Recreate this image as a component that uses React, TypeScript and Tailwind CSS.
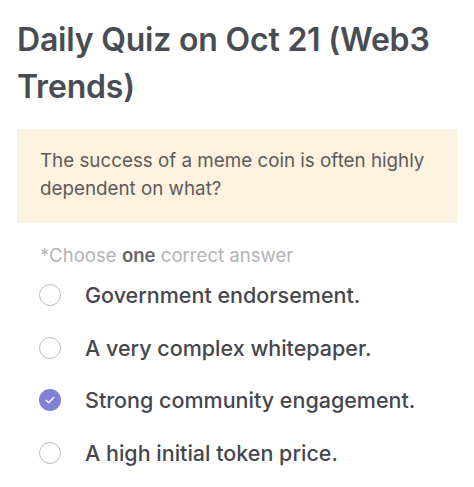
import React from 'react';

const options = [
  'Government endorsement.',
  'A very complex whitepaper.',
  'Strong community engagement.',
  'A high initial token price.',
];

const Radio = ({ checked }: { checked: boolean }) =>
  checked ? (
    <span className="flex h-[22px] w-[22px] items-center justify-center rounded-full bg-[#7f82d6]">
      <svg width="12" height="12" viewBox="0 0 12 12" fill="none">
        <path d="M2.2 6.3l2.5 2.4 5-5.2" stroke="#fff" strokeWidth="1.4" strokeLinecap="round" strokeLinejoin="round" />
      </svg>
    </span>
  ) : (
    <span className="h-[22px] w-[22px] rounded-full border-[1.5px] border-[#bdbdbd] bg-white" />
  );

export default function App() {
  const selected = 2;
  return (
    <div className="min-h-[487px] w-[474px] bg-white font-['Inter',sans-serif]">
      <div className="px-[17px] pt-[16px]">
        <h1 className="text-[32px] leading-[47px] font-semibold tracking-[-0.2px] text-[#4a4c53]">
          Daily Quiz on Oct 21 (Web3 Trends)
        </h1>

        <div className="mt-[19px] bg-[#fdf1df] px-[23px] pt-[18px] pb-[20px]">
          <p className="text-[18.8px] leading-[28px] text-[#5c5b59]">
            The success of a meme coin is often highly dependent on what?
          </p>
        </div>

        <div className="mt-[19px] pl-[23px] text-[18.6px] leading-[26px] text-[#b3b3b3]">
          *Choose <span className="font-semibold text-[#666]">one</span> correct answer
        </div>

        <ul className="mt-[1px]">
          {options.map((o, i) => (
            <li key={o} className="flex h-[52.5px] items-center pl-[22px]">
              <Radio checked={i === selected} />
              <span className="ml-[24px] text-[21.5px] font-medium text-[#45474d]">{o}</span>
            </li>
          ))}
        </ul>
      </div>
    </div>
  );
}
